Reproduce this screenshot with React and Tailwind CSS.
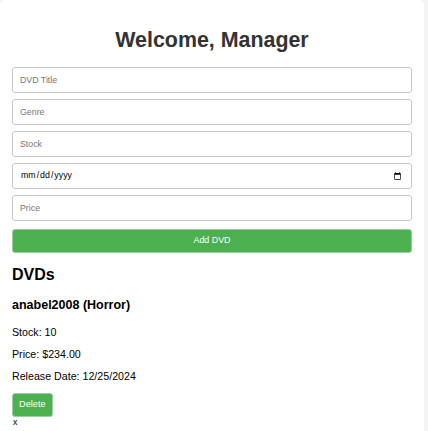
import React, { useState } from "react";

const font = { fontFamily: '"Liberation Sans", Arial, sans-serif' };

export default function App() {
  const [dvds] = useState([
    { title: "anabel2008", genre: "Horror", stock: 10, price: 234, date: "12/25/2024" },
  ]);

  const inputClass =
    "block w-full h-[26px] px-[7px] border border-[#c9c9c9] rounded-[3px] bg-white text-[8.8px] text-black placeholder:text-[#767676] outline-none";

  return (
    <div className="min-h-screen bg-[#f4f4f4]" style={font}>
      <div className="w-[424px] min-h-[431px] bg-white rounded-[6px] px-3 pt-[13px] pb-3">
        <h1 className="mt-[15px] text-center text-[21.4px] leading-[24px] font-bold text-[#333]">
          Welcome, Manager
        </h1>

        <form className="mt-[15px] flex flex-col gap-[6px]" onSubmit={(e) => e.preventDefault()}>
          <input className={inputClass} placeholder="DVD Title" />
          <input className={inputClass} placeholder="Genre" />
          <input className={inputClass} placeholder="Stock" />
          <input className={inputClass} type="date" />
          <input className={inputClass} placeholder="Price" />
          <button
            type="submit"
            className="mt-[2px] w-full h-[24px] bg-[#4caf50] border border-[#9fcaa1] rounded-[3px] text-white text-[8.9px]"
          >
            Add DVD
          </button>
        </form>

        <h2 className="mt-[13px] text-[16px] leading-[18px] font-bold text-black">DVDs</h2>

        {dvds.map((d) => (
          <div key={d.title} className="text-black">
            <h3 className="mt-[14px] text-[12.5px] leading-[14px] font-bold">
              {d.title} ({d.genre})
            </h3>
            <p className="mt-[13.5px] text-[10.67px] leading-[12px]">Stock: {d.stock}</p>
            <p className="mt-[10.3px] text-[10.67px] leading-[12px]">Price: ${d.price.toFixed(2)}</p>
            <p className="mt-[10.3px] text-[10.67px] leading-[12px]">Release Date: {d.date}</p>
            <button className="mt-[11px] block h-[24px] px-[6px] bg-[#4caf50] border border-[#9fcaa1] rounded-[3px] text-white text-[9.2px]">
              Delete
            </button>
            <div className="pl-px text-[8.9px] leading-[11px]">x</div>
          </div>
        ))}
      </div>
    </div>
  );
}
